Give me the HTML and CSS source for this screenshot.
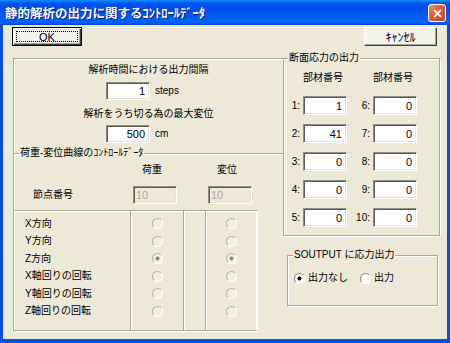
FILE: index.html
```html
<!DOCTYPE html>
<html lang="ja">
<head>
    <meta charset="UTF-8">
    <meta name="viewport" content="width=device-width, initial-scale=1.0">
    <title>静的解析の出力に関するｺﾝﾄﾛｰﾙﾃﾞｰﾀ</title>
    <link rel="stylesheet" href="styles.css">
</head>
<body>
    <div class="window">
        <div class="titlebar">
            <span class="title">静的解析の出力に関するｺﾝﾄﾛｰﾙﾃﾞｰﾀ</span>
            <button class="close" type="button">
                <svg width="9" height="9" viewBox="0 0 9 9"><path d="M1 1L8 8M8 1L1 8" stroke="#fff" stroke-width="1.8" fill="none"/></svg>
            </button>
        </div>
        <div class="client">
            <div class="buttons">
                <button class="btn btn-ok" type="button">OK</button>
                <button class="btn btn-cancel" type="button">ｷｬﾝｾﾙ</button>
            </div>
            <div class="main">
                <div class="frame">
                    <div class="settings">
                        <div class="caption">解析時間における出力間隔</div>
                        <div class="field-row">
                            <input class="num" type="text" value="1" readonly>
                            <span>steps</span>
                        </div>
                        <div class="caption caption-2">解析をうち切る為の最大変位</div>
                        <div class="field-row field-row-2">
                            <input class="num" type="text" value="500" readonly>
                            <span>cm</span>
                        </div>
                    </div>
                    <fieldset class="curve">
                        <legend>荷重-変位曲線のｺﾝﾄﾛｰﾙﾃﾞｰﾀ</legend>
                        <div class="curve-grid curve-head">
                            <span></span><span class="col-title">荷重</span><span></span><span class="col-title">変位</span>
                        </div>
                        <div class="curve-grid curve-node">
                            <span class="node-label">節点番号</span>
                            <input class="num num-off" type="text" value="10" disabled>
                            <span></span>
                            <input class="num num-off" type="text" value="10" disabled>
                        </div>
                        <div class="curve-grid curve-table">
                            <div class="col col-labels">
                                <div class="cell">X方向</div>
                                <div class="cell">Y方向</div>
                                <div class="cell">Z方向</div>
                                <div class="cell">X軸回りの回転</div>
                                <div class="cell">Y軸回りの回転</div>
                                <div class="cell">Z軸回りの回転</div>
                            </div>
                            <div class="col col-radio">
                                <div class="cell"><input type="radio" name="load" disabled></div>
                                <div class="cell"><input type="radio" name="load" disabled></div>
                                <div class="cell"><input type="radio" name="load" checked disabled></div>
                                <div class="cell"><input type="radio" name="load" disabled></div>
                                <div class="cell"><input type="radio" name="load" disabled></div>
                                <div class="cell"><input type="radio" name="load" disabled></div>
                            </div>
                            <div class="col col-gap"></div>
                            <div class="col col-radio">
                                <div class="cell"><input type="radio" name="disp" disabled></div>
                                <div class="cell"><input type="radio" name="disp" disabled></div>
                                <div class="cell"><input type="radio" name="disp" checked disabled></div>
                                <div class="cell"><input type="radio" name="disp" disabled></div>
                                <div class="cell"><input type="radio" name="disp" disabled></div>
                                <div class="cell"><input type="radio" name="disp" disabled></div>
                            </div>
                        </div>
                    </fieldset>
                </div>

                <div class="side">
                    <fieldset class="group stress">
                        <legend>断面応力の出力</legend>
                        <div class="stress-grid stress-head">
                            <span></span><span>部材番号</span><span></span><span>部材番号</span>
                        </div>
                        <div class="stress-grid stress-rows">
                            <label>1:</label><input class="num" type="text" value="1" readonly>
                            <label>6:</label><input class="num" type="text" value="0" readonly>
                            <label>2:</label><input class="num" type="text" value="41" readonly>
                            <label>7:</label><input class="num" type="text" value="0" readonly>
                            <label>3:</label><input class="num" type="text" value="0" readonly>
                            <label>8:</label><input class="num" type="text" value="0" readonly>
                            <label>4:</label><input class="num" type="text" value="0" readonly>
                            <label>9:</label><input class="num" type="text" value="0" readonly>
                            <label>5:</label><input class="num" type="text" value="0" readonly>
                            <label>10:</label><input class="num" type="text" value="0" readonly>
                        </div>
                    </fieldset>
                    <fieldset class="group soutput">
                        <legend>SOUTPUT に応力出力</legend>
                        <div class="radio-row">
                            <label class="option"><input type="radio" name="soutput" checked><span>出力なし</span></label>
                            <label class="option option-2"><input type="radio" name="soutput"><span>出力</span></label>
                        </div>
                    </fieldset>
                </div>
            </div>
        </div>
    </div>
</body>
</html>
```

FILE: styles.css
```css
* {
    box-sizing: border-box;
}
body {
    margin: 0;
    font-family: "Liberation Sans", "Noto Sans CJK JP", sans-serif;
    font-size: 10px;
    line-height: 12px;
    color: #000;
}
.window {
    width: 450px;
    height: 343px;
    display: flex;
    flex-direction: column;
    background: #0a4be0;
}
.titlebar {
    height: 25px;
    display: flex;
    align-items: center;
    justify-content: space-between;
    padding: 1px 4px 0 5px;
    background: linear-gradient(#0997ff 0%, #0053ee 12%, #0050ee 45%, #0066ff 86%, #0058f0 94%, #003dd7 100%);
}
.title {
    font-family: "Noto Sans CJK JP", sans-serif;
    font-weight: bold;
    font-size: 12.5px;
    color: #fff;
    text-shadow: 1px 1px #0a1883;
}
.close {
    width: 18px;
    height: 18px;
    padding: 0;
    display: flex;
    align-items: center;
    justify-content: center;
    border: 1px solid #fff;
    border-radius: 3px;
    background: linear-gradient(135deg, #f19a7c 0%, #e2643f 35%, #c7421f 100%);
}
.client {
    flex: 1;
    margin: 0 3px 4px;
    padding: 2px 7px 8px 9px;
    background: #ece9d8;
    display: flex;
    flex-direction: column;
}
.buttons {
    display: flex;
    justify-content: space-between;
    margin-right: 3px;
}
.btn {
    height: 19px;
    padding: 0;
    font-family: "Liberation Sans", "Noto Sans CJK JP", sans-serif;
    font-size: 11px;
    color: #000;
    background: #f3f2ec;
    border: 1px solid;
    border-color: #fff #404040 #404040 #fff;
    box-shadow: inset -1px -1px #a7a69c;
    position: relative;
}
.btn-ok {
    width: 70px;
    border-color: #000;
    box-shadow: inset 1px 1px #fff, inset -1px -1px #404040, inset -2px -2px #a7a69c;
}
.btn-ok::after {
    content: "";
    position: absolute;
    top: 3px;
    left: 3px;
    right: 3px;
    bottom: 3px;
    border: 1px dotted #000;
}
.btn-cancel {
    width: 73px;
    font-size: 12px;
}
.main {
    flex: 1;
    display: flex;
    margin-top: 6px;
}

/* left area: top and left edge only, the right group closes it */
.frame {
    width: 270px;
    margin: 6px 0 0 1px;
    border-top: 1px solid #aca899;
    border-left: 1px solid #aca899;
    box-shadow: inset 1px 1px #fff;
    display: flex;
    flex-direction: column;
}
.settings {
    display: flex;
    flex-direction: column;
    align-items: center;
    padding-top: 5px;
}
.caption-2 {
    margin-top: 8px;
}
.field-row {
    align-self: flex-start;
    margin: 6px 0 0 92px;
    display: flex;
    align-items: center;
    gap: 5px;
}
.field-row-2 {
    margin-top: 5px;
}
.num {
    width: 44px;
    height: 18px;
    margin: 0;
    padding: 0 4px;
    font-family: "Liberation Sans", sans-serif;
    font-size: 11px;
    text-align: right;
    color: #000;
    background: #fff;
    border: 1px solid;
    border-color: #8f8d84 #fff #fff #8f8d84;
    box-shadow: inset 1px 1px #5b5a54, inset -1px -1px #e6e3d3;
    outline: none;
}
.num-off {
    text-align: left;
    padding: 0 2px;
    color: #aca899;
    background: #ece9d8;
}
.curve {
    flex: 1;
    min-width: 0;
    margin: 4px 0 0;
    padding: 0;
    border: 0;
    border-top: 1px solid #aca899;
    box-shadow: inset 0 1px #fff;
    display: flex;
    flex-direction: column;
}
.curve legend,
.group legend {
    padding: 0 1px;
    background: #ece9d8;
    line-height: 12px;
}
.curve legend {
    margin-left: 5px;
}
.curve-grid {
    display: grid;
    grid-template-columns: 117px 53px 22px 50px;
    align-items: center;
}
.curve-head {
    margin-top: 5px;
}
.col-title {
    padding-left: 11px;
}
.curve-node {
    margin-top: 10px;
}
.node-label {
    padding-left: 19px;
}
.curve-node .num {
    margin-left: 2px;
}
.curve-table {
    flex: 1;
    width: 243px;
    margin-top: 6px;
    align-items: stretch;
    border-top: 1px solid #aca899;
    border-right: 1px solid #aca899;
    border-bottom: 1px solid #aca899;
    box-shadow: 1px 1px #fff;
}
.col {
    padding-top: 4px;
    border-right: 1px solid #aca899;
    box-shadow: inset 0 1px #fff, 1px 0 #fff;
}
.col:last-child {
    border-right: 0;
}
.cell {
    height: 17.5px;
    display: flex;
    align-items: center;
}
.col-labels .cell {
    padding-left: 11px;
}
.col-radio .cell {
    justify-content: center;
}
input[type="radio"] {
    appearance: none;
    width: 11px;
    height: 11px;
    margin: 0;
    border-radius: 50%;
    border: 1px solid;
    border-color: #8f8d84 #fff #fff #8f8d84;
    background: #fff;
}
input[type="radio"]:checked {
    background: radial-gradient(circle, #000 0 1.8px, #fff 2.3px);
}
input[type="radio"]:disabled {
    border-color: #b5b2a5 #fff #fff #b5b2a5;
    background: #f1efe5;
}
input[type="radio"]:disabled:checked {
    background: radial-gradient(circle, #8a887f 0 1.8px, #f1efe5 2.3px);
}

/* right side */
.side {
    flex: 0 0 157px;
    display: flex;
    flex-direction: column;
}
.group {
    min-width: 0;
    margin: 0;
    padding: 0;
    border: 1px solid #aca899;
    box-shadow: inset 1px 1px #fff, 1px 1px #fff;
}
.stress legend {
    margin-left: 4px;
}
.stress-grid {
    display: grid;
    grid-template-columns: 17px 44px 24px 44px;
    column-gap: 1px;
    padding-left: 1px;
}
.stress-head {
    margin-top: 8px;
    white-space: nowrap;
}
.stress-rows {
    margin-top: 12px;
    padding-bottom: 8px;
    row-gap: 9px;
}
.stress-rows label {
    text-align: right;
    padding-right: 2px;
    line-height: 19px;
}
.stress-rows .num {
    height: 19px;
}
.soutput {
    width: 151px;
    margin: 13px 0 0 4px;
}
.soutput legend {
    margin-left: 5px;
}
.radio-row {
    display: flex;
    align-items: center;
    margin-top: 11px;
    padding: 0 0 21px 6px;
}
.option {
    display: flex;
    align-items: center;
    gap: 3px;
}
.option-2 {
    margin-left: 12px;
}
```
